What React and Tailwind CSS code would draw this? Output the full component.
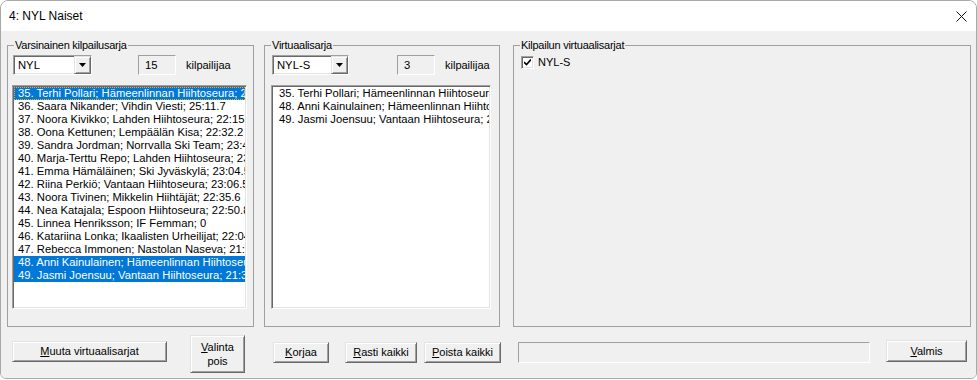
import React from "react";

const rows = [
  { t: "35. Terhi Pollari; Hämeenlinnan Hiihtoseura; 22:01.3", sel: true, focus: true },
  { t: "36. Saara Nikander; Vihdin Viesti; 25:11.7" },
  { t: "37. Noora Kivikko; Lahden Hiihtoseura; 22:15.6" },
  { t: "38. Oona Kettunen; Lempäälän Kisa; 22:32.2" },
  { t: "39. Sandra Jordman; Norrvalla Ski Team; 23:47.1" },
  { t: "40. Marja-Terttu Repo; Lahden Hiihtoseura; 23:12.0" },
  { t: "41. Emma Hämäläinen; Ski Jyväskylä; 23:04.5" },
  { t: "42. Riina Perkiö; Vantaan Hiihtoseura; 23:06.5" },
  { t: "43. Noora Tivinen; Mikkelin Hiihtäjät; 22:35.6" },
  { t: "44. Nea Katajala; Espoon Hiihtoseura; 22:50.8" },
  { t: "45. Linnea Henriksson; IF Femman; 0" },
  { t: "46. Katariina Lonka; Ikaalisten Urheilijat; 22:04.9" },
  { t: "47. Rebecca Immonen; Nastolan Naseva; 21:48.2" },
  { t: "48. Anni Kainulainen; Hämeenlinnan Hiihtoseura; 21:52.4", sel: true },
  { t: "49. Jasmi Joensuu; Vantaan Hiihtoseura; 21:36.0", sel: true },
];

const virtual = [
  "35. Terhi Pollari; Hämeenlinnan Hiihtoseura; 22:01.3",
  "48. Anni Kainulainen; Hämeenlinnan Hiihtoseura; 21:52.4",
  "49. Jasmi Joensuu; Vantaan Hiihtoseura; 21:36.0",
];

const bevel =
  "bg-[#f0f0f0] border border-t-[#e3e3e3] border-l-[#e3e3e3] border-r-[#696969] border-b-[#696969] shadow-[inset_1px_1px_0_#ffffff,inset_-1px_-1px_0_#a0a0a0]";
const sunken =
  "border border-t-[#a0a0a0] border-l-[#a0a0a0] border-r-[#ffffff] border-b-[#ffffff] shadow-[inset_1px_1px_0_#696969,inset_-1px_-1px_0_#e3e3e3]";

function Btn({ className, children }) {
  return (
    <div className={`flex items-center justify-center text-center text-[11px] text-black ${bevel} ${className}`}>
      {children}
    </div>
  );
}

function Combo({ value, className }) {
  return (
    <div className={`flex h-[20px] bg-white ${sunken} ${className}`}>
      <span className="flex-1 pl-[4px] text-[11.25px] leading-[18px]">{value}</span>
      <div className={`flex w-[17px] items-center justify-center ${bevel}`}>
        <svg width="7" height="4" viewBox="0 0 7 4">
          <path d="M0 0h7L3.5 4z" fill="#000" />
        </svg>
      </div>
    </div>
  );
}

function Count({ value, className }) {
  return (
    <div
      className={`h-[20px] w-[38px] bg-[#f0f0f0] pl-[6px] text-[11.25px] leading-[18px] border border-t-[#a0a0a0] border-l-[#a0a0a0] border-r-[#ffffff] border-b-[#ffffff] ${className}`}
    >
      {value}
    </div>
  );
}

export default function App() {
  return (
    <div className="h-[380px] w-[977px] bg-white font-['Liberation_Sans',Arial,sans-serif] text-[11px] text-black">
      <div className="flex h-[379px] w-[977px] flex-col overflow-hidden rounded-t-[8px] rounded-b-[6px] border border-[#a8a8a8]">
        {/* title bar */}
        <div className="flex h-[30px] items-center justify-between bg-white pl-[8px] pr-[9px]">
          <span className="text-[12px]">4: NYL Naiset</span>
          <svg width="11" height="11" viewBox="0 0 11 11">
            <path d="M0.5 0.5l10 10M10.5 0.5l-10 10" stroke="#111" strokeWidth="1" />
          </svg>
        </div>

        <div className="flex flex-1 flex-col bg-[#f0f0f0] pl-[6px] pt-[8px]">
          <div className="flex">
            {/* group 1 */}
            <fieldset className="h-[288px] w-[247px] border border-[#a0a0a0]">
              <legend className="ml-[6px] px-[1px] text-[11px] leading-[13px] tracking-[-0.25px]">
                Varsinainen kilpailusarja
              </legend>
              <div className="mt-[3px] flex items-center">
                <Combo value="NYL" className="ml-[5px] w-[79px]" />
                <Count value="15" className="ml-[46px]" />
                <span className="ml-[10px]">kilpailijaa</span>
              </div>
              <div className={`ml-[4px] mt-[10px] h-[224px] w-[235px] overflow-hidden bg-white pt-[1px] ${sunken}`}>
                {rows.map((r, i) => (
                  <div
                    key={i}
                    className={`mx-[1px] h-[13px] overflow-hidden whitespace-nowrap pl-[4px] text-[11.25px] leading-[13px] ${
                      r.sel ? "bg-[#0078d7] text-white" : ""
                    } ${r.focus ? "outline-1 -outline-offset-1 outline-dotted outline-[#f5a623]" : ""}`}
                  >
                    {r.t}
                  </div>
                ))}
              </div>
            </fieldset>

            {/* group 2 */}
            <fieldset className="ml-[10px] h-[288px] w-[236px] border border-[#a0a0a0]">
              <legend className="ml-[6px] px-[1px] text-[11px] leading-[13px] tracking-[-0.25px]">
                Virtuaalisarja
              </legend>
              <div className="mt-[3px] flex items-center">
                <Combo value="NYL-S" className="ml-[7px] w-[77px]" />
                <Count value="3" className="ml-[48px]" />
                <span className="ml-[10px]">kilpailijaa</span>
              </div>
              <div className={`ml-[6px] mt-[10px] h-[224px] w-[220px] overflow-hidden bg-white pt-[1px] ${sunken}`}>
                {virtual.map((t, i) => (
                  <div
                    key={i}
                    className="mx-[1px] h-[13px] overflow-hidden whitespace-nowrap pl-[6px] text-[11.25px] leading-[13px]"
                  >
                    {t}
                  </div>
                ))}
              </div>
            </fieldset>

            {/* group 3 */}
            <fieldset className="ml-[13px] h-[288px] w-[458px] border border-[#a0a0a0]">
              <legend className="ml-[6px] px-[1px] text-[11px] leading-[13px] tracking-[-0.25px]">
                Kilpailun virtuaalisarjat
              </legend>
              <div className="ml-[7px] mt-[4px] flex items-center">
                <div className={`flex h-[13px] w-[13px] items-center justify-center bg-white ${sunken}`}>
                  <svg width="7" height="7" viewBox="0 0 7 7">
                    <path d="M0 3l2.5 2.5L7 0.5" stroke="#000" strokeWidth="1.6" fill="none" />
                  </svg>
                </div>
                <span className="ml-[4px] leading-[13px]">NYL-S</span>
              </div>
            </fieldset>
          </div>

          {/* button row */}
          <div className="mt-[8px] flex items-start">
            <Btn className="ml-[5px] mt-[6px] h-[21px] w-[155px]">
              <span>
                <span className="underline">M</span>uuta virtuaalisarjat
              </span>
            </Btn>
            <Btn className="ml-[23px] h-[38px] w-[55px] leading-[14px]">
              <span>
                <span className="underline">V</span>alinta
                <br />
                pois
              </span>
            </Btn>
            <Btn className="ml-[28px] mt-[7px] h-[21px] w-[56px]">
              <span>
                <span className="underline">K</span>orjaa
              </span>
            </Btn>
            <Btn className="ml-[16px] mt-[7px] h-[21px] w-[72px]">
              <span>
                <span className="underline">R</span>asti kaikki
              </span>
            </Btn>
            <Btn className="ml-[7px] mt-[7px] h-[21px] w-[77px]">
              <span>
                <span className="underline">P</span>oista kaikki
              </span>
            </Btn>
            <div className="ml-[17px] mt-[7px] h-[21px] w-[352px] border border-t-[#a0a0a0] border-l-[#a0a0a0] border-r-[#ffffff] border-b-[#ffffff] bg-[#f0f0f0]" />
            <Btn className="ml-[16px] mt-[5px] h-[22px] w-[81px]">
              <span>
                <span className="underline">V</span>almis
              </span>
            </Btn>
          </div>
        </div>
      </div>
    </div>
  );
}
